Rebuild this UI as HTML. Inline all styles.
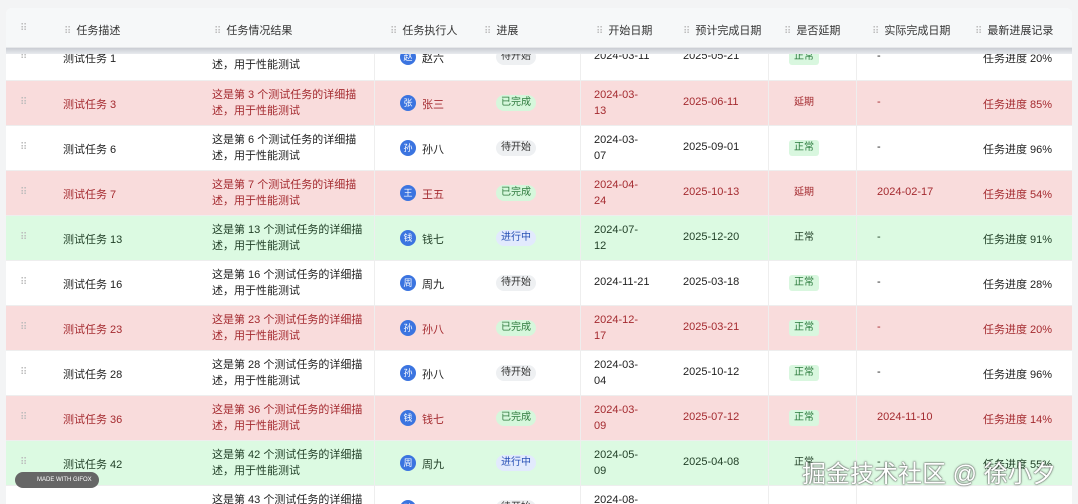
<!DOCTYPE html>
<html><head><meta charset="utf-8"><style>
*{margin:0;padding:0;box-sizing:border-box}
html,body{width:1078px;height:504px;overflow:hidden}
body{background:#f3f4f5;font-family:"Liberation Sans","Noto Sans CJK SC",sans-serif;font-size:11px;color:#222;position:relative}
.tbl{position:absolute;left:6px;top:8px;width:1066px;height:496px;background:#fff;overflow:hidden;border-radius:6px 6px 0 0}
.hd{position:absolute;left:0;top:0;width:1066px;height:40px;background:#f6f8f9;z-index:2;border-bottom:1px solid #e6e8ea}
.bar{position:absolute;left:0;top:40px;width:1066px;height:6px;background:linear-gradient(#c9ccd3,#e8eaee);z-index:2}
.h{position:absolute;top:14px;color:#333;font-size:11px;white-space:nowrap}
.h i{font-style:normal;color:#bbb;margin-right:5px;font-size:10px}
.r{position:absolute;left:0;width:1066px;height:45px;border-bottom:1px solid #eee;overflow:hidden}
.r>*{position:absolute;white-space:nowrap}
.red{background:#f9dcdc;color:#a42a2f}
.grn{background:#dcfae2;color:#1f3d25}
.d{left:14px;top:16px;color:#bbb;font-size:10px}
.c1{left:57px;top:15px}
.c2{left:206px;top:6px;line-height:16px}
.v{top:0;width:1px;height:45px;background:#eee}
.av{left:394px;top:14px;width:16px;height:16px;border-radius:50%;background:#3b74e0;color:#fff;font-size:9px;text-align:center;line-height:16px}
.nm{left:416px;top:15px}
.b{left:490px;top:14px;height:16px;line-height:16px;padding:0 5px;border-radius:8px;font-size:10px}
.bw{background:#eef0f2;color:#333}.bd{background:#d6f7dc;color:#2e7a3d}.bp{background:#e2eafd;color:#2750b5}
.c5{left:588px;top:15px}.c5.t{top:6px;line-height:16px}
.c6{left:677px;top:15px}
.s{left:783px;top:14px;height:16px;line-height:16px;padding:0 5px;font-size:10px;border-radius:3px}
.sn{background:#d9f7df;color:#2a7a3c}.sr{color:#a42a2f}
.c8{left:871px;top:15px}
.c9{left:977px;top:15px}
.wm{position:absolute;left:802px;top:454px;font-size:24px;color:#fff;text-shadow:0 0 2px #555,0 0 1px #333;z-index:5;white-space:nowrap}
.gf{position:absolute;left:15px;top:472px;width:84px;height:16px;border-radius:8px;background:#666;color:#fff;font-size:6px;line-height:16px;padding-left:22px;z-index:5;white-space:nowrap}
</style></head><body>
<div class="tbl">
<div class="hd">
<span class="h" style="left:14px"><i>⠿</i></span>
<span class="h" style="left:58px"><i>⠿</i>任务描述</span>
<span class="h" style="left:208px"><i>⠿</i>任务情况结果</span>
<span class="h" style="left:384px"><i>⠿</i>任务执行人</span>
<span class="h" style="left:478px"><i>⠿</i>进展</span>
<span class="h" style="left:590px"><i>⠿</i>开始日期</span>
<span class="h" style="left:677px"><i>⠿</i>预计完成日期</span>
<span class="h" style="left:778px"><i>⠿</i>是否延期</span>
<span class="h" style="left:866px"><i>⠿</i>实际完成日期</span>
<span class="h" style="left:969px"><i>⠿</i>最新进展记录</span>
</div>
<div class="bar"></div>

<div class="r" style="top:28px"><span class="d" style="top:15px">⠿</span><span class="c1" style="top:14px">测试任务 1</span><span class="c2" style="top:5px">这是第 1 个测试任务的详细描<br>述，用于性能测试</span><span class="v" style="left:368px"></span><span class="av" style="top:13px">赵</span><span class="nm" style="top:14px">赵六</span><span class="b bw" style="top:13px">待开始</span><span class="v" style="left:574px"></span><span class="c5" style="top:14px">2024-03-11</span><span class="c6" style="top:14px">2025-05-21</span><span class="v" style="left:762px"></span><span class="s sn" style="top:13px">正常</span><span class="v" style="left:850px"></span><span class="c8" style="top:14px">-</span><span class="c9" style="top:14px">任务进度 20%</span></div>

<div class="r red" style="top:73px"><span class="d">⠿</span><span class="c1">测试任务 3</span><span class="c2">这是第 3 个测试任务的详细描<br>述，用于性能测试</span><span class="v" style="left:368px"></span><span class="av">张</span><span class="nm">张三</span><span class="b bd">已完成</span><span class="v" style="left:574px"></span><span class="c5 t">2024-03-<br>13</span><span class="c6">2025-06-11</span><span class="v" style="left:762px"></span><span class="s sr">延期</span><span class="v" style="left:850px"></span><span class="c8">-</span><span class="c9">任务进度 85%</span></div>

<div class="r" style="top:118px"><span class="d">⠿</span><span class="c1">测试任务 6</span><span class="c2">这是第 6 个测试任务的详细描<br>述，用于性能测试</span><span class="v" style="left:368px"></span><span class="av">孙</span><span class="nm">孙八</span><span class="b bw">待开始</span><span class="v" style="left:574px"></span><span class="c5 t">2024-03-<br>07</span><span class="c6">2025-09-01</span><span class="v" style="left:762px"></span><span class="s sn">正常</span><span class="v" style="left:850px"></span><span class="c8">-</span><span class="c9">任务进度 96%</span></div>

<div class="r red" style="top:163px"><span class="d">⠿</span><span class="c1">测试任务 7</span><span class="c2">这是第 7 个测试任务的详细描<br>述，用于性能测试</span><span class="v" style="left:368px"></span><span class="av">王</span><span class="nm">王五</span><span class="b bd">已完成</span><span class="v" style="left:574px"></span><span class="c5 t">2024-04-<br>24</span><span class="c6">2025-10-13</span><span class="v" style="left:762px"></span><span class="s sr">延期</span><span class="v" style="left:850px"></span><span class="c8">2024-02-17</span><span class="c9">任务进度 54%</span></div>

<div class="r grn" style="top:208px"><span class="d">⠿</span><span class="c1">测试任务 13</span><span class="c2">这是第 13 个测试任务的详细描<br>述，用于性能测试</span><span class="v" style="left:368px"></span><span class="av">钱</span><span class="nm">钱七</span><span class="b bp">进行中</span><span class="v" style="left:574px"></span><span class="c5 t">2024-07-<br>12</span><span class="c6">2025-12-20</span><span class="v" style="left:762px"></span><span class="s">正常</span><span class="v" style="left:850px"></span><span class="c8">-</span><span class="c9">任务进度 91%</span></div>

<div class="r" style="top:253px"><span class="d">⠿</span><span class="c1">测试任务 16</span><span class="c2">这是第 16 个测试任务的详细描<br>述，用于性能测试</span><span class="v" style="left:368px"></span><span class="av">周</span><span class="nm">周九</span><span class="b bw">待开始</span><span class="v" style="left:574px"></span><span class="c5">2024-11-21</span><span class="c6">2025-03-18</span><span class="v" style="left:762px"></span><span class="s sn">正常</span><span class="v" style="left:850px"></span><span class="c8">-</span><span class="c9">任务进度 28%</span></div>

<div class="r red" style="top:298px"><span class="d">⠿</span><span class="c1">测试任务 23</span><span class="c2">这是第 23 个测试任务的详细描<br>述，用于性能测试</span><span class="v" style="left:368px"></span><span class="av">孙</span><span class="nm">孙八</span><span class="b bd">已完成</span><span class="v" style="left:574px"></span><span class="c5 t">2024-12-<br>17</span><span class="c6">2025-03-21</span><span class="v" style="left:762px"></span><span class="s sn">正常</span><span class="v" style="left:850px"></span><span class="c8">-</span><span class="c9">任务进度 20%</span></div>

<div class="r" style="top:343px"><span class="d">⠿</span><span class="c1">测试任务 28</span><span class="c2">这是第 28 个测试任务的详细描<br>述，用于性能测试</span><span class="v" style="left:368px"></span><span class="av">孙</span><span class="nm">孙八</span><span class="b bw">待开始</span><span class="v" style="left:574px"></span><span class="c5 t">2024-03-<br>04</span><span class="c6">2025-10-12</span><span class="v" style="left:762px"></span><span class="s sn">正常</span><span class="v" style="left:850px"></span><span class="c8">-</span><span class="c9">任务进度 96%</span></div>

<div class="r red" style="top:388px"><span class="d">⠿</span><span class="c1">测试任务 36</span><span class="c2">这是第 36 个测试任务的详细描<br>述，用于性能测试</span><span class="v" style="left:368px"></span><span class="av">钱</span><span class="nm">钱七</span><span class="b bd">已完成</span><span class="v" style="left:574px"></span><span class="c5 t">2024-03-<br>09</span><span class="c6">2025-07-12</span><span class="v" style="left:762px"></span><span class="s sn">正常</span><span class="v" style="left:850px"></span><span class="c8">2024-11-10</span><span class="c9">任务进度 14%</span></div>

<div class="r grn" style="top:433px"><span class="d">⠿</span><span class="c1">测试任务 42</span><span class="c2">这是第 42 个测试任务的详细描<br>述，用于性能测试</span><span class="v" style="left:368px"></span><span class="av">周</span><span class="nm">周九</span><span class="b bp">进行中</span><span class="v" style="left:574px"></span><span class="c5 t">2024-05-<br>09</span><span class="c6">2025-04-08</span><span class="v" style="left:762px"></span><span class="s">正常</span><span class="v" style="left:850px"></span><span class="c8">-</span><span class="c9">任务进度 55%</span></div>

<div class="r" style="top:478px;height:18px;border-bottom:none"><span class="c2">这是第 43 个测试任务的详细描</span><span class="v" style="left:368px"></span><span class="av">孙</span><span class="b bw">待开始</span><span class="v" style="left:574px"></span><span class="c5 t">2024-08-</span><span class="v" style="left:762px"></span><span class="v" style="left:850px"></span></div>
</div>
<div class="gf">MADE WITH GIFOX</div>
<div class="wm">掘金技术社区 @ 徐小夕</div>
</body></html>
